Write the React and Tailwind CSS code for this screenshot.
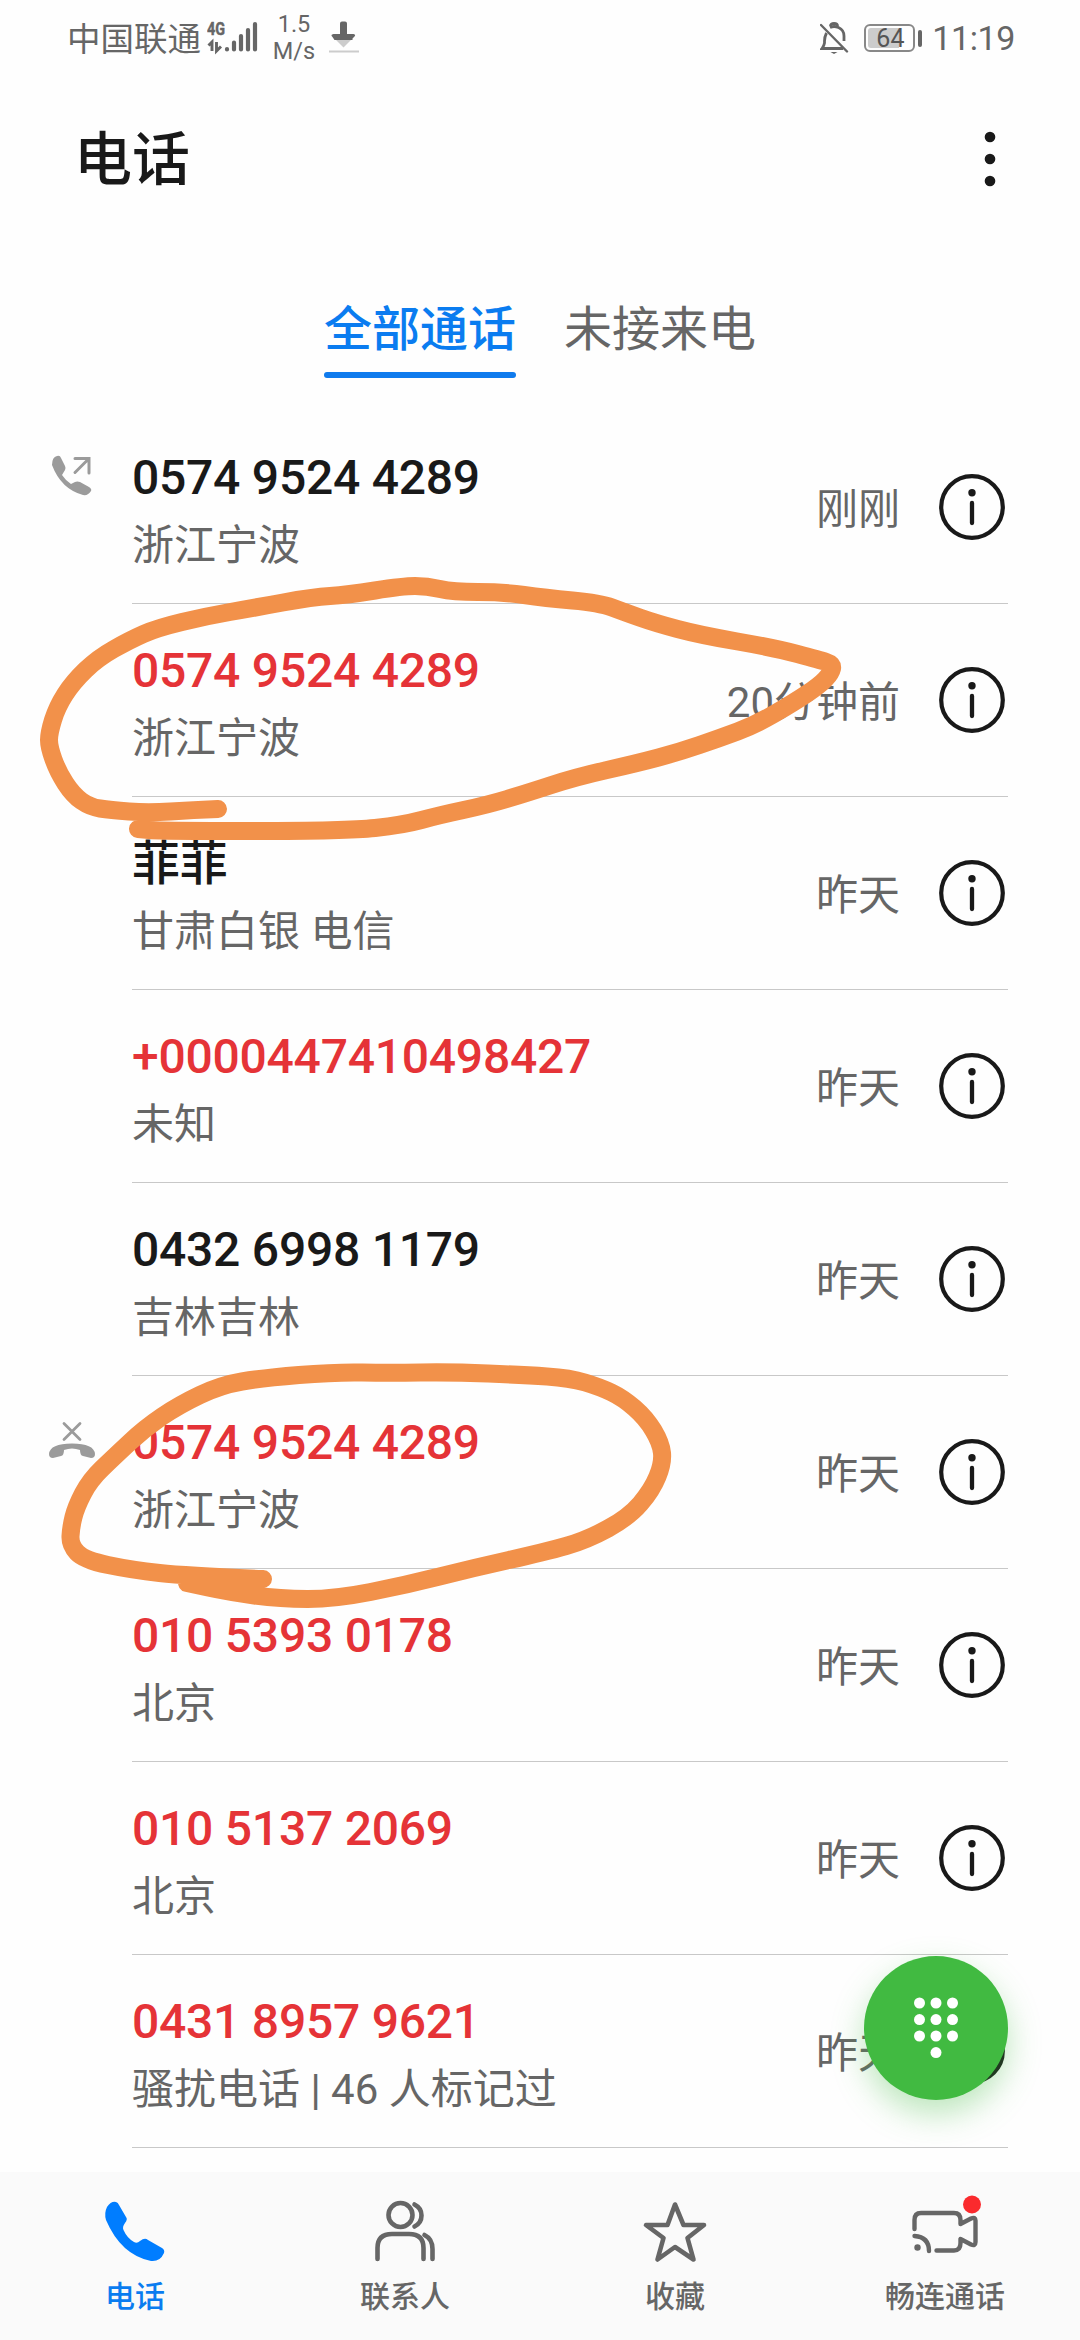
const calls = [
  { name: "0574 9524 4289", place: "浙江宁波", time: "刚刚", icon: "out" },
  { name: "0574 9524 4289", place: "浙江宁波", time: "20分钟前", missed: true },
  { name: "菲菲", place: "甘肃白银 电信", time: "昨天" },
  { name: "+0000447410498427", place: "未知", time: "昨天", missed: true },
  { name: "0432 6998 1179", place: "吉林吉林", time: "昨天" },
  { name: "0574 9524 4289", place: "浙江宁波", time: "昨天", missed: true, icon: "declined" },
  { name: "010 5393 0178", place: "北京", time: "昨天", missed: true },
  { name: "010 5137 2069", place: "北京", time: "昨天", missed: true },
  { name: "0431 8957 9621", place: "骚扰电话 | 46 人标记过", time: "昨天", missed: true },
];

function StatusBar() {
  return (
    <header className="flex h-[78px] items-center justify-between pl-[67px] pr-[65px] text-[#666]">
      <div className="flex items-center">
        <span className="pt-[2px] text-[33.5px] leading-[40px]">中国联通</span>
        <svg width="52" height="40" viewBox="0 0 52 40" className="-mt-[2px] ml-[6px]" fill="none" stroke="#666" strokeLinecap="round">
          <text x="0" y="17" fontSize="19" fontWeight="700" fontFamily="Roboto" fill="#666" stroke="#666" strokeWidth="0.500" textLength="18" lengthAdjust="spacingAndGlyphs">4G</text>
          <path d="M5 33V24L1.500 27.500M9.500 24V33L14 28.500" strokeWidth="2.900" strokeLinecap="butt" />
          <path d="M20 31V31.500M27 24.500V31.500M34 18V31.500M41 12V31.500M48 6V31.500" strokeWidth="4.200" />
        </svg>
        <div className="-mt-[2px] ml-[14px] flex w-[42px] flex-col items-center text-[23.5px] leading-[27px]">
          <span>1.5</span>
          <span>M/s</span>
        </div>
        <svg width="32" height="40" viewBox="0 0 32 40" className="-mt-[2px] ml-[13px]">
          <path d="M12 5.500Q12 3.500 14 3.500H17Q19 3.500 19 5.500V16H25.500Q28.500 16.500 26 19L24.500 20.500V22H6.500L4.500 19Q2 16.500 5.500 16H12Z" fill="#666" />
          <path d="M8 22H23L15.500 29.500Z" fill="#ccc" />
          <path d="M1 33.500H31" stroke="#ccc" strokeWidth="2" />
        </svg>
      </div>
      <div className="-mt-[2px] flex items-center">
        <svg width="30" height="34" viewBox="0 0 30 34" fill="none" stroke="#666" strokeWidth="2.800">
          <path d="M6.500 12Q4.500 16 4.500 20V22Q4 25 2 27.500H23M10 6.500Q14 4.500 18.500 6.500Q24 9 24 15V20" />
          <path d="M10.500 5Q10.500 2.500 14 2.500Q17.500 2.500 17.500 5" />
          <path d="M1 4L27 30.500" strokeLinecap="round" strokeWidth="2.400" />
          <path d="M10.500 31H17.500L14 33Z" fill="#666" stroke="none" />
        </svg>
        <div className="ml-[14px] flex h-[28px] w-[51px] items-center rounded-[6px] border-2 border-[#888] p-[2px]">
          <div className="flex h-full w-[31px] items-center justify-start rounded-l-[3px] bg-[#ccc] pl-[8px] text-[25px] leading-none text-[#555]">64</div>
        </div>
        <div className="ml-[3px] h-[17px] w-[4px] rounded-full bg-[#666]" />
        <span className="ml-[10px] text-[34px] leading-[40px] tracking-[-0.4px]">11:19</span>
      </div>
    </header>
  );
}

function CallIcon({ kind }) {
  if (kind === "out") {
    return (
      <svg width="48" height="48" viewBox="0 0 48 48" className="mt-[42px]">
        <path d="M3 12Q3 4 8 3Q11 2 12 5L16 13Q17 15 16 17L13 22Q17 28 22 31L26 29Q28 28 31 29L40 34Q43 36 42 38Q39 43 34 42Q12 36 3 12Z" fill="#9b9b9b" />
        <path d="M26 5.500H40V20M39.500 6L26 19.500" stroke="#9b9b9b" strokeWidth="3" strokeLinecap="round" fill="none" />
      </svg>
    );
  }
  if (kind === "declined") {
    return (
      <svg width="48" height="48" viewBox="0 0 48 48" className="mt-[42px]">
        <path d="M15 5.500L31 21.500M31 5.500L15 21.500" stroke="#9b9b9b" strokeWidth="2.800" strokeLinecap="round" />
        <path d="M0 36Q1 25.500 23 25.500Q45 25.500 46 36Q46 40 42 40L34 38Q31 37.500 31 32Q23 29 15 32Q15 37.500 12 38L4 40Q0 40 0 36Z" fill="#9b9b9b" />
      </svg>
    );
  }
  return null;
}

function CallRow({ call }) {
  return (
    <li className="flex h-[193px] pl-[49px] pr-[72px]">
      <div className="w-[83px] shrink-0">
        <CallIcon kind={call.icon} />
      </div>
      <div className="flex flex-1 items-center border-b border-[#c8c8c8]">
        <div className="flex flex-1 flex-col whitespace-nowrap pt-[4px]">
          <span className={call.missed ? "text-[48px] font-medium leading-[72px] tracking-[-0.24px] text-[#e53337]" : "text-[48px] font-medium leading-[72px] tracking-[-0.24px] text-[#191919]"}>{call.name}</span>
          <span className="text-[42px] leading-[63px] text-[#666]">{call.place}</span>
        </div>
        <span className="whitespace-nowrap pt-[4px] text-[42px] leading-[63px] text-[#666]">{call.time}</span>
        <svg width="66" height="66" viewBox="0 0 66 66" className="ml-[39px] mr-[3px]">
          <circle cx="33" cy="33" r="30.800" fill="none" stroke="#191919" strokeWidth="4.200" />
          <circle cx="33" cy="18.700" r="3.700" fill="#191919" />
          <path d="M33 29V49" stroke="#191919" strokeWidth="4.300" strokeLinecap="round" />
        </svg>
      </div>
    </li>
  );
}

const tabs = [
  {
    label: "电话",
    active: true,
    icon: <path d="M3 20Q1 13 4 7Q8 1 13 2Q15 2.500 16 5L23 17Q25 19 22 23Q19 27 20.500 30Q24 38 31 42Q34 44 37 41Q42 37 45 40L59 48Q62 50 61 53Q57 62 48 61Q18 55 3 20Z" fill="#007dff" />,
  },
  {
    label: "联系人",
    icon: (
      <g fill="none" stroke="#666" strokeWidth="4.600" strokeLinecap="round">
        <circle cx="27.500" cy="15" r="12" />
        <path d="M4.500 59V48Q4.500 34 19 34H36Q50.500 34 50.500 48V59M41.500 4.500Q48.500 8 48.500 15.500Q48.500 23 41.500 26.500M51.500 35Q59.500 39 59.500 49V59" />
      </g>
    ),
  },
  {
    label: "收藏",
    icon: <path d="M32 4.500L40.500 25H61L44.500 38L50.500 59.500L32 47L14.500 59.500L20.500 38L3 25H24.500Z" fill="none" stroke="#666" strokeWidth="4.600" strokeLinejoin="round" />,
  },
  {
    label: "畅连通话",
    icon: (
      <g fill="none" stroke="#666" strokeWidth="4.400" strokeLinecap="round" strokeLinejoin="round">
        <path d="M1.500 29V20Q1.500 13 8 13H41Q47.500 13 47.500 20V24L58 18.500Q62.500 16.500 62.500 20.500V42Q62.500 46.500 58 44.500L47.500 39V43Q47.500 50.500 41 50.500H23.500" />
        <path d="M1.500 36Q16 37 16 51" />
        <circle cx="4.500" cy="47.500" r="3.200" fill="#666" stroke="none" />
        <circle cx="59" cy="4.500" r="9" fill="#fa2a2d" stroke="none" />
      </g>
    ),
  },
];

const loops = [
  [[218,809],[193,810],[148,813],[110,810],[90,807],[73,795],[58,772],[49,747],[49,733],[57,707],[73,682],[98,658],[130,640],[157,628],[207,616],[253,608],[313,597],[347,595],[403,586],[427,586],[453,592],[503,592],[545,598],[600,603],[624,612],[655,623],[700,635],[775,648],[820,660],[833,664],[831,673],[820,685],[793,703],[755,725],[720,738],[679,752],[638,763],[576,777],[527,793],[487,805],[440,815],[403,825],[347,831],[160,831],[138,829]],
  [[263,1579],[187,1576],[132,1570],[84,1560],[70,1545],[71,1527],[76,1507],[90,1480],[114,1457],[145,1428],[179,1405],[221,1385],[263,1378],[335,1372],[389,1373],[452,1372],[524,1375],[570,1378],[600,1387],[623,1398],[646,1418],[661,1443],[663,1463],[652,1490],[629,1517],[587,1540],[545,1552],[473,1568],[406,1585],[335,1599],[280,1599],[229,1592],[187,1583]],
];

// Rounds a hand-drawn point list by passing through segment midpoints.
function smooth(points) {
  let d = `M${points[0]}`;
  for (let i = 1; i < points.length - 1; i++) {
    const [x, y] = points[i];
    const [nx, ny] = points[i + 1];
    d += ` Q${x},${y} ${(x + nx) / 2},${(y + ny) / 2}`;
  }
  return `${d} L${points[points.length - 1]}`;
}

export default function App() {
  return (
    <div lang="zh-CN" className="relative flex h-[2340px] w-[1080px] flex-col overflow-hidden bg-[#fefefe] font-[Roboto,'Noto_Sans_CJK_SC',sans-serif]">
      <StatusBar />
      <div className="flex h-[162px] items-center justify-between pl-[74px] pr-[84px]">
        <h1 className="pt-[2px] text-[58px] font-medium leading-[80px] text-[#191919]">电话</h1>
        <svg width="12" height="60" viewBox="0 0 12 60" fill="#191919">
          <circle cx="6" cy="8" r="5.300" />
          <circle cx="6" cy="30" r="5.300" />
          <circle cx="6" cy="52" r="5.300" />
        </svg>
      </div>
      <div className="flex h-[171px] justify-center gap-[48px] pt-[54px] text-[48px] leading-[72px]">
        <div className="flex h-[84px] flex-col justify-between font-medium text-[#0a7cf0]">
          <span>全部通话</span>
          <div className="h-[6px] rounded-full bg-[#0f7bed]" />
        </div>
        <span className="text-[#666]">未接来电</span>
      </div>
      <ul className="flex flex-1 flex-col">
        {calls.map((call, i) => <CallRow key={i} call={call} />)}
      </ul>
      <nav className="grid h-[168px] grid-cols-4 bg-[#fafafa] pt-[28px]">
        {tabs.map((tab) => (
          <div key={tab.label} className="flex flex-col items-center">
            <svg width="64" height="64" viewBox="0 0 64 64" className="overflow-visible">{tab.icon}</svg>
            <span className={tab.active ? "mt-[11px] text-[30px] font-medium leading-[44px] text-[#0a7cf0]" : "mt-[11px] text-[30px] font-medium leading-[44px] text-[#666]"}>{tab.label}</span>
          </div>
        ))}
      </nav>
      <svg width="1080" height="2340" viewBox="0 0 1080 2340" className="pointer-events-none absolute inset-0" fill="none" stroke="#f2914a" strokeWidth="18" strokeLinecap="round" strokeLinejoin="round">
        {loops.map((points, i) => <path key={i} d={smooth(points)} />)}
      </svg>
      <button className="absolute bottom-[240px] right-[72px] flex size-[144px] items-center justify-center rounded-full bg-[#41ba41] shadow-[0_14px_32px_rgba(65,186,65,0.35)]">
        <svg width="144" height="144" viewBox="0 0 144 144" fill="#fff">
          {[47, 63.6, 80].flatMap((y) => [55.5, 72, 88.5].map((x) => <circle key={`${x}-${y}`} cx={x} cy={y} r="5.500" />))}
          <circle cx="72" cy="96.600" r="5.500" />
        </svg>
      </button>
    </div>
  );
}
